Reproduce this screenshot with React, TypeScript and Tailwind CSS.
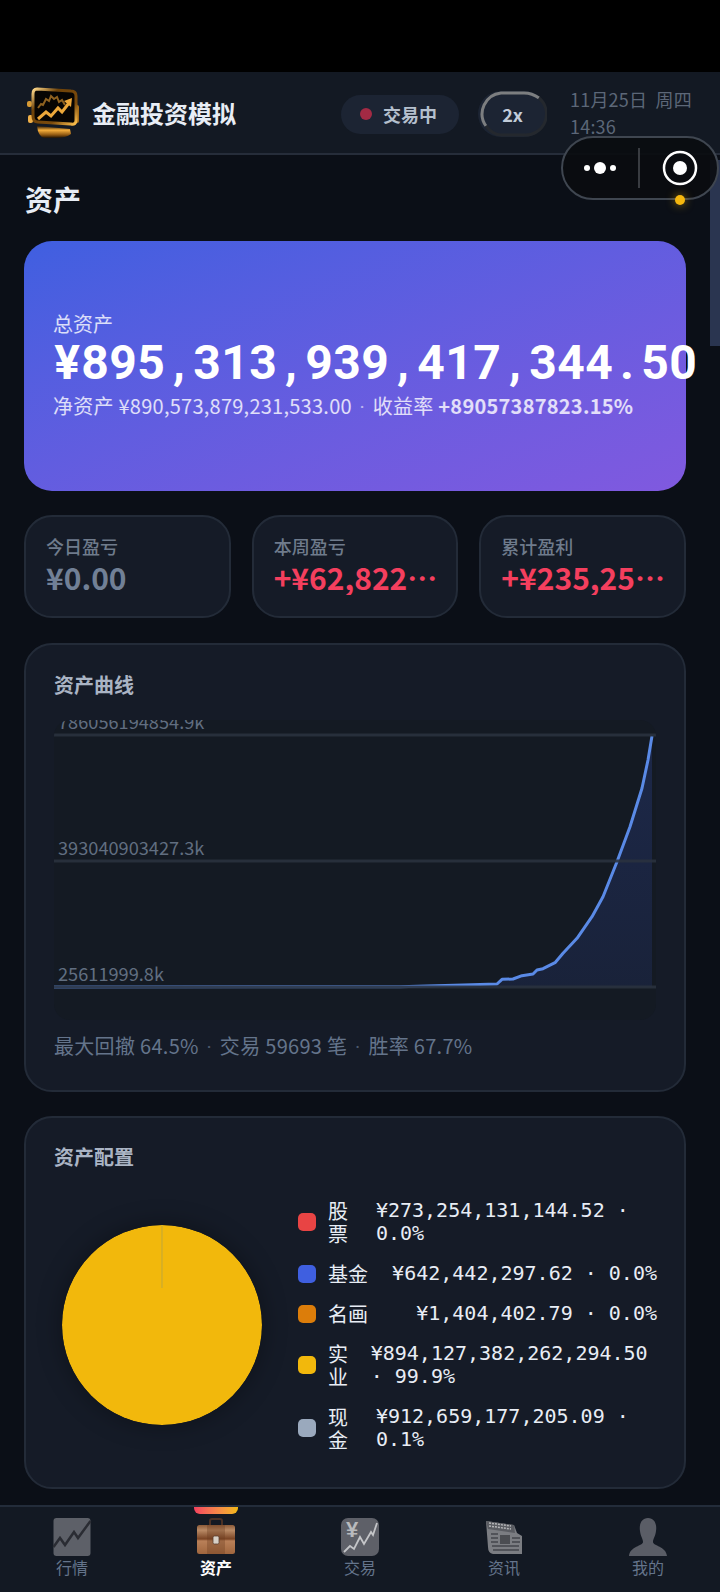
import React from "react";

const CJK = "font-['Noto_Sans_CJK_SC','Noto_Sans',sans-serif]";
const MONO = "font-['DejaVu_Sans_Mono',monospace]";

function Logo() {
  return (
    <svg viewBox="0 0 56 56" className="h-[56px] w-[56px] shrink-0">
      <defs>
        <linearGradient id="gold" x1="0" y1="0" x2="1" y2="1">
          <stop offset="0" stopColor="#ffd98a" />
          <stop offset="0.3" stopColor="#6e4208" />
          <stop offset="0.7" stopColor="#7a4a0c" />
          <stop offset="1" stopColor="#ffc14d" />
        </linearGradient>
        <linearGradient id="base" x1="0" y1="0" x2="0" y2="1">
          <stop offset="0" stopColor="#2a1806" />
          <stop offset="0.35" stopColor="#f5ae3c" />
          <stop offset="0.75" stopColor="#8c5510" />
          <stop offset="1" stopColor="#1d1206" />
        </linearGradient>
      </defs>
      <rect x="1" y="16" width="5" height="6" rx="2" fill="#d79a34" />
      <rect x="2" y="30" width="5" height="8" rx="2" fill="#f0b048" />
      <rect x="49" y="20" width="4" height="18" rx="2" fill="#a86e18" />
      <path d="M11 4 L45 6 Q50 6 50 11 L50 35 Q50 40 45 39 L12 37 Q7 37 7 31 L7 9 Q7 4 11 4Z" fill="#070503" stroke="url(#gold)" strokeWidth="3" />
      <path d="M12 23 L15 19 L17 20 L20 14 L23 16 L25 11 L28 14 L31 12 L33 17 L36 15 L39 20" fill="none" stroke="#8f6220" strokeWidth="2" />
      <path d="M12 34 L20 27 L25 31 L32 23 L36 27 L43 18" fill="none" stroke="#eda83a" strokeWidth="3" />
      <path d="M38 16 L46 13 L45 22Z" fill="#eda83a" />
      <path d="M11 41 L44 44 L45 49 Q40 53 30 53 L18 53 Q12 51 11 41Z" fill="url(#base)" />
    </svg>
  );
}

function NavChart() {
  return (
    <svg viewBox="0 0 40 40" className="h-[40px] w-[40px]">
      <rect x="1.500" y="1" width="37" height="38" rx="3" fill="#5d6068" />
      <path d="M1.500 30 L8 21 L13 28 L22 15 L26 21 L38.500 4" fill="none" stroke="#2a2c33" strokeWidth="2.500" />
    </svg>
  );
}

function NavCase() {
  return (
    <svg viewBox="0 0 40 40" className="h-[40px] w-[40px]">
      <defs>
        <linearGradient id="leather" x1="0" y1="0" x2="0" y2="1">
          <stop offset="0" stopColor="#8b5a38" />
          <stop offset="0.18" stopColor="#b98a65" />
          <stop offset="0.48" stopColor="#7a4424" />
          <stop offset="0.55" stopColor="#b98058" />
          <stop offset="1" stopColor="#a0663e" />
        </linearGradient>
      </defs>
      <path d="M14 9 V4 Q14 2 16 2 H24 Q26 2 26 4 V9" fill="none" stroke="#4b3125" strokeWidth="2" />
      <rect x="1" y="8" width="38" height="29" rx="2.500" fill="url(#leather)" />
      <rect x="11" y="8" width="18" height="29" fill="#6b3d20" opacity="0.35" />
      <rect x="17" y="19" width="6" height="8" rx="1.500" fill="#d7d0c6" stroke="#5a4030" strokeWidth="0.800" />
    </svg>
  );
}

function NavTrade() {
  return (
    <svg viewBox="0 0 40 40" className="h-[40px] w-[40px]">
      <rect x="1" y="1" width="38" height="38" rx="7" fill="#5e6068" />
      <text x="12" y="20" textAnchor="middle" fontSize="22" fontWeight="700" fill="#b8babd" fontFamily="Liberation Sans, sans-serif">¥</text>
      <path d="M4 35 L10 29 L14 32 L20 20 L24 27 L31 15 L33 18 L37 6" fill="none" stroke="#c4c5c8" strokeWidth="1.800" />
    </svg>
  );
}

function NavNews() {
  return (
    <svg viewBox="0 0 40 40" className="h-[40px] w-[40px]">
      <path d="M2 4 L30 8 L33 16 L38 19 L38 37 L9 37 Q4 36 4 30Z" fill="#7b7d82" />
      <path d="M2 4 L30 8 L31 16 L4 12Z" fill="#5a5c62" />
      <path d="M5 6 L27 9 M5 9 L27 12" stroke="#b5b6b9" strokeWidth="1.500" strokeDasharray="2 1" />
      <rect x="16" y="18" width="10" height="9" fill="#4b4d52" />
      <path d="M7 17 H14 M7 21 H14 M7 25 H14 M8 29 H35 M9 33 H35 M28 21 H36 M28 25 H36" stroke="#44464c" strokeWidth="1.500" />
    </svg>
  );
}

function NavUser() {
  return (
    <svg viewBox="0 0 40 40" className="h-[40px] w-[40px]">
      <path d="M20 1 C27 1 29 8 28 14 C27.500 19 25 22 25 25 C25 29 38 29 39 39 L1 39 C2 29 15 29 15 25 C15 22 12.500 19 12 14 C11 8 13 1 20 1Z" fill="#5a5d66" />
    </svg>
  );
}

function Dot() {
  return (
    <>
      {" "}
      <span className="mx-[3px] font-['Roboto',sans-serif] font-normal opacity-70">·</span>{" "}
    </>
  );
}

const navItems = [
  { label: "行情", icon: <NavChart /> },
  { label: "资产", icon: <NavCase />, active: true },
  { label: "交易", icon: <NavTrade /> },
  { label: "资讯", icon: <NavNews /> },
  { label: "我的", icon: <NavUser /> },
];

const legend = [
  { name: "股票", value: "¥273,254,131,144.52 · 0.0%", color: "bg-[#e84444]" },
  { name: "基金", value: "¥642,442,297.62 · 0.0%", color: "bg-[#3f5fe0]" },
  { name: "名画", value: "¥1,404,402.79 · 0.0%", color: "bg-[#dc7d0a]" },
  { name: "实业", value: "¥894,127,382,262,294.50 · 99.9%", color: "bg-[#f2b80c]" },
  { name: "现金", value: "¥912,659,177,205.09 · 0.1%", color: "bg-[#9aa9bd]" },
];

const stats = [
  { label: "今日盈亏", value: "¥0.00", color: "text-[#718096]" },
  { label: "本周盈亏", value: "+¥62,822,918,301.44", color: "text-[#f43f5e]" },
  { label: "累计盈利", value: "+¥235,254,117,902.18", color: "text-[#f43f5e]" },
];

const total = "¥895,313,939,417,344.50";

const curve =
  "M54 987 L400 986.700 L463 985 L497 984 L502 979.300 L513 979 L522 975.700 L533 974 L537 970 L543 968.700 L555 962.700 L563 953.300 L577 938.300 L592 916.700 L603 896.700 L617 861.700 L630 826.700 L642 788.300 L648 760 L652 736";

function Chart() {
  return (
    <svg viewBox="54 720 602 300" className="block h-[300px] w-[602px] rounded-[16px] bg-[#141a23]">
      <defs>
        <linearGradient id="area" x1="0" y1="0" x2="0" y2="1">
          <stop offset="0" stopColor="#3f5fe0" stopOpacity="0.2" />
          <stop offset="1" stopColor="#3f5fe0" stopOpacity="0.12" />
        </linearGradient>
      </defs>
      <path d={`${curve} L652 987 L54 987Z`} fill="url(#area)" />
      <path d={curve} fill="none" stroke="#5a8ae6" strokeWidth="3" strokeLinejoin="round" />
      <g stroke="#2a323f" strokeWidth="3" strokeOpacity="0.88">
        <line x1="54" y1="735" x2="656" y2="735" />
        <line x1="54" y1="861" x2="656" y2="861" />
        <line x1="54" y1="987" x2="656" y2="987" />
      </g>
      <g fill="#616e80" fontSize="18.200" fontFamily="Noto Sans CJK SC, sans-serif">
        <text x="58" y="729">786056194854.9k</text>
        <text x="58" y="855">393040903427.3k</text>
        <text x="58" y="981">25611999.8k</text>
      </g>
    </svg>
  );
}

function Pie() {
  return (
    <svg viewBox="0 0 200 200" className="h-[200px] w-[200px] shrink-0 rounded-full shadow-[0_0_24px_rgba(0,0,0,0.35)]">
      <circle cx="100" cy="100" r="100" fill="#f2b80c" />
      <line x1="100" y1="0" x2="100" y2="63" stroke="#bfa73a" strokeWidth="1" />
    </svg>
  );
}

export default function App() {
  return (
    <div className={`relative flex h-[1592px] w-[720px] flex-col overflow-hidden bg-[#0b0f17] ${CJK}`}>
      <div className="h-[72px] shrink-0 bg-black" />

      <header className="flex h-[83px] shrink-0 items-center border-b-2 border-[#262d3a] bg-[#131923] pl-[26px]">
        <Logo />
        <div className="ml-[10px] text-[24px] font-bold leading-[32px] text-[#e8edf5]">金融投资模拟</div>
        <div className="ml-[105px] mt-[3px] flex h-[39px] w-[118px] items-center rounded-full bg-[#1c2433] pl-[19px]">
          <span className="h-[12px] w-[12px] rounded-full bg-[#a32a44]" />
          <span className="ml-[11px] text-[18px] font-bold text-[#b4bfcd]">交易中</span>
        </div>
        <div className="relative ml-[19px] mt-[3px] flex h-[46px] w-[69px] items-center justify-center rounded-full bg-[#1c2433] text-[18px] font-bold text-[#c2ccd9]">
          2x
          <svg viewBox="0 0 69 46" className="absolute inset-0 h-[46px] w-[69px]">
            <path d="M8 35 A21 21 0 0 1 23 2 H46 Q54 2 61 7" fill="none" stroke="#7c7e80" strokeWidth="3" />
            <path d="M61 7 A21 21 0 0 1 46 44 H23 Q15 44 8 35" fill="none" stroke="#24282e" strokeWidth="3" />
          </svg>
        </div>
        <div className="ml-[23px] w-[130px] whitespace-pre-wrap text-[18px] leading-[27px] tracking-[0.2px] text-[#5c6778]">
          {"11月25日  周四 14:36"}
        </div>
      </header>

      <main className="flex flex-1 flex-col overflow-hidden pl-[24px] pr-[34px] pt-[24px]">
        <h1 className="mb-[22px] pl-[1px] text-[28px] font-bold leading-[40px] text-[#e8edf5]">资产</h1>

        <section className="flex h-[250px] shrink-0 flex-col justify-center rounded-[28px] bg-gradient-to-br from-[#3f5fe0] to-[#8059df] px-[29px]">
          <div className="text-[20px] leading-[26px] text-white/80">总资产</div>
          <div className="flex whitespace-nowrap font-['Roboto',sans-serif] text-[48px] font-bold leading-[52px] text-white">
            {total.split("").map((c, i) => (
              <span key={i} className="w-[28px] shrink-0 text-center">
                {c}
              </span>
            ))}
          </div>
          <div className="mt-[2px] whitespace-nowrap text-[20px] leading-[30px] tracking-[0.25px] text-white/80">
            净资产 ¥890,573,879,231,533.00
            <Dot />
            收益率 <span className="font-bold">+89057387823.15%</span>
          </div>
        </section>

        <section className="mt-[24px] grid h-[103px] shrink-0 grid-cols-3 gap-[21px]">
          {stats.map((s) => (
            <div key={s.label} className="min-w-0 rounded-[28px] border-2 border-[#232b38] bg-[#151b27] pl-[20px] pr-[17px] pt-[17px]">
              <div className="text-[18px] font-medium leading-[24px] text-[#6f7b8c]">{s.label}</div>
              <div className={`mt-[1px] truncate text-[30px] font-bold leading-[36px] ${s.color}`}>{s.value}</div>
            </div>
          ))}
        </section>

        <section className="mt-[25px] h-[449px] shrink-0 rounded-[28px] border-2 border-[#232b38] bg-[#151b27] px-[28px] pt-[25px]">
          <h2 className="text-[20px] font-bold leading-[30px] text-[#aab4c4]">资产曲线</h2>
          <div className="mt-[20px]">
            <Chart />
          </div>
          <div className="mt-[12px] whitespace-nowrap text-[20px] leading-[28px] tracking-[0.3px] text-[#64748b]">
            最大回撤 64.5%
            <Dot />
            交易 59693 笔
            <Dot />
            胜率 67.7%
          </div>
        </section>

        <section className="mt-[24px] h-[373px] shrink-0 rounded-[28px] border-2 border-[#232b38] bg-[#151b27] px-[28px] pt-[24px]">
          <h2 className="text-[20px] font-bold leading-[30px] text-[#aab4c4]">资产配置</h2>
          <div className="mt-[27px] flex items-center pl-[8px]">
            <Pie />
            <ul className="ml-[36px] flex w-[359px] shrink-0 flex-col gap-[17px]">
              {legend.map((l) => (
                <li key={l.name} className="flex items-center gap-[12px] text-[20px] leading-[23px] text-[#e8edf5]">
                  <span className={`h-[18px] w-[18px] shrink-0 rounded-[5px] ${l.color}`} />
                  <div className="flex min-w-0 flex-1 items-center justify-between gap-[12px]">
                    <span>{l.name}</span>
                    <span className={MONO}>{l.value}</span>
                  </div>
                </li>
              ))}
            </ul>
          </div>
        </section>
      </main>

      <nav className="relative grid h-[87px] shrink-0 grid-cols-5 border-t-2 border-[#232c3a] bg-[#131923]">
        {navItems.map((n) => (
          <div key={n.label} className="relative flex flex-col items-center pt-[10px]">
            {n.active && (
              <span className="absolute left-1/2 top-0 h-[7px] w-[44px] -translate-x-1/2 rounded-b-[6px] bg-gradient-to-r from-[#f43f5e] to-[#f2b80c]" />
            )}
            {n.icon}
            <span className={`-mt-[2px] text-[16px] leading-[24px] ${n.active ? "font-bold text-white" : "text-[#64748b]"}`}>{n.label}</span>
          </div>
        ))}
      </nav>

      {/* system overlays */}
      <div className="absolute right-0 top-[160px] h-[186px] w-[10px] bg-[#2a3550]" />
      <div className="absolute left-[561px] top-[136px] h-[64px] w-[158px] rounded-full border-2 border-[#3f4650] bg-[#0a0c10]/90">
        <svg viewBox="0 0 154 60" className="block h-[60px] w-[154px]">
          <circle cx="24" cy="30" r="3" fill="#fff" />
          <circle cx="37" cy="30" r="6" fill="#fff" />
          <circle cx="50" cy="30" r="3" fill="#fff" />
          <line x1="76" y1="10" x2="76" y2="50" stroke="#4a4d52" strokeWidth="1.500" />
          <circle cx="117" cy="30" r="16" fill="none" stroke="#fff" strokeWidth="2.500" />
          <circle cx="117" cy="30" r="7" fill="#fff" />
        </svg>
      </div>
      <span className="absolute left-[675px] top-[195px] h-[10px] w-[10px] rounded-full bg-[#f5b70e] shadow-[0_0_10px_rgba(245,183,14,0.6)]" />
    </div>
  );
}
